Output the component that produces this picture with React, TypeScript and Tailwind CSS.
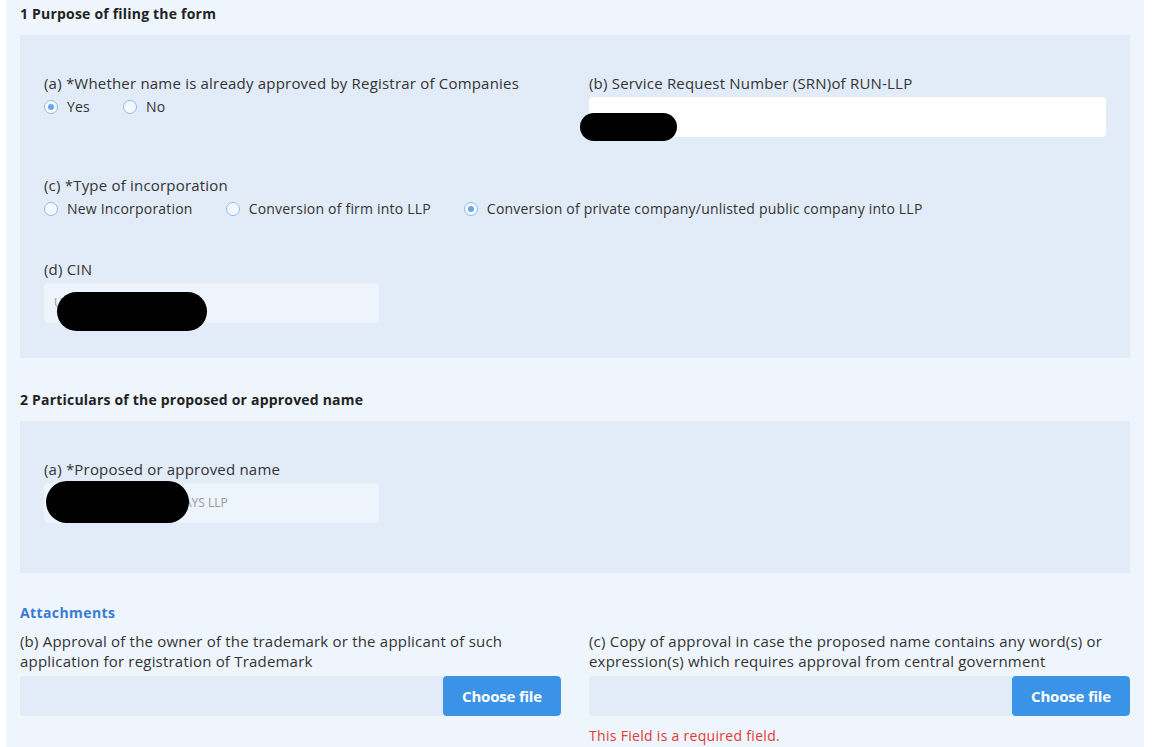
import React from "react";

const font = { fontFamily: '"Open Sans", "Liberation Sans", sans-serif' };

function Radio({ label, checked }: { label: string; checked?: boolean }) {
  return (
    <label className="flex items-center gap-[9px] text-[14px] leading-[20px] tracking-[0.2px] text-[#333]">
      <span className="flex h-[14px] w-[14px] items-center justify-center rounded-full border border-[#8fbcee] bg-[#f4f8fd]">
        {checked && <span className="h-[6px] w-[6px] rounded-full bg-[#6aa5e8]" />}
      </span>
      {label}
    </label>
  );
}

function Blob({ className }: { className: string }) {
  return <span className={`absolute bg-black ${className}`} />;
}

function FileInput() {
  return (
    <div className="flex h-[40px] overflow-hidden rounded-[4px] bg-[#e2ecf8]">
      <div className="flex-1" />
      <button
        type="button"
        className="w-[118px] rounded-[4px] bg-[#3b93e7] text-[15px] font-bold tracking-[-0.2px] text-white"
      >
        Choose file
      </button>
    </div>
  );
}

const label = "text-[15px] leading-[20px] tracking-[0.2px] text-[#333]";
const heading = "text-[14px] font-bold leading-[20px] tracking-[0.2px] text-[#222]";

export default function App() {
  return (
    <div className="min-h-[747px] w-full bg-white" style={font}>
      <div className="ml-[6px] w-[1138px] bg-[#eef5fd] px-[14px] pb-[1px] pt-[4px]">
        <h2 className={heading}>1 Purpose of filing the form</h2>

        <section className="mt-[11px] bg-[#e2ecf8] px-[24px] pb-[35px] pt-[38px]">
          <div className="grid grid-cols-2 gap-x-[28px]">
            <div>
              <p className={label}>(a) *Whether name is already approved by Registrar of Companies</p>
              <div className="mt-[4px] flex gap-[33px]">
                <Radio label="Yes" checked />
                <Radio label="No" />
              </div>
            </div>
            <div>
              <p className={label}>(b) Service Request Number (SRN)of RUN-LLP</p>
              <div className="relative mt-[4px] h-[40px] rounded-[4px] bg-white">
                <Blob className="left-[-9px] top-[16px] h-[28px] w-[97px] rounded-[14px]" />
              </div>
            </div>
          </div>

          <div className="mt-[38px]">
            <p className={label}>(c) *Type of incorporation</p>
            <div className="mt-[4px] flex gap-[33px]">
              <Radio label="New Incorporation" />
              <Radio label="Conversion of firm into LLP" />
              <Radio label="Conversion of private company/unlisted public company into LLP" checked />
            </div>
          </div>

          <div className="mt-[40px]">
            <p className={label}>(d) CIN</p>
            <div className="relative mt-[4px] flex h-[40px] w-[335px] items-center rounded-[4px] bg-[#eef4fc] px-[10px] text-[12px] text-[#999]">
              U
              <Blob className="left-[13px] top-[9px] h-[39px] w-[150px] rounded-[20px]" />
            </div>
          </div>
        </section>

        <h2 className={`mt-[32px] ${heading}`}>2 Particulars of the proposed or approved name</h2>

        <section className="mt-[11px] bg-[#e2ecf8] px-[24px] pb-[50px] pt-[38px]">
          <p className={label}>(a) *Proposed or approved name</p>
          <div className="relative mt-[4px] flex h-[40px] w-[335px] items-center rounded-[4px] bg-[#eef4fc] pl-[140px] text-[12px] text-[#999]">
            AYS LLP
            <Blob className="left-[2px] top-[-2px] h-[42px] w-[143px] rounded-[21px]" />
          </div>
        </section>

        <h3 className="mt-[30px] text-[14px] font-bold leading-[20px] tracking-[0.4px] text-[#3a7bd5]">Attachments</h3>

        <div className="mt-[8px] grid grid-cols-2 gap-x-[28px]">
          <div>
            <p className={`h-[40px] ${label}`}>
              (b) Approval of the owner of the trademark or the applicant of such application for registration of
              Trademark
            </p>
            <div className="mt-[5px]">
              <FileInput />
            </div>
          </div>
          <div>
            <p className={`h-[40px] ${label}`}>
              (c) Copy of approval in case the proposed name contains any word(s) or expression(s) which requires
              approval from central government
            </p>
            <div className="mt-[5px]">
              <FileInput />
            </div>
            <p className="mt-[10px] text-[14px] leading-[20px] tracking-[0.3px] text-[#e53935]">
              This Field is a required field.
            </p>
          </div>
        </div>
      </div>
    </div>
  );
}
